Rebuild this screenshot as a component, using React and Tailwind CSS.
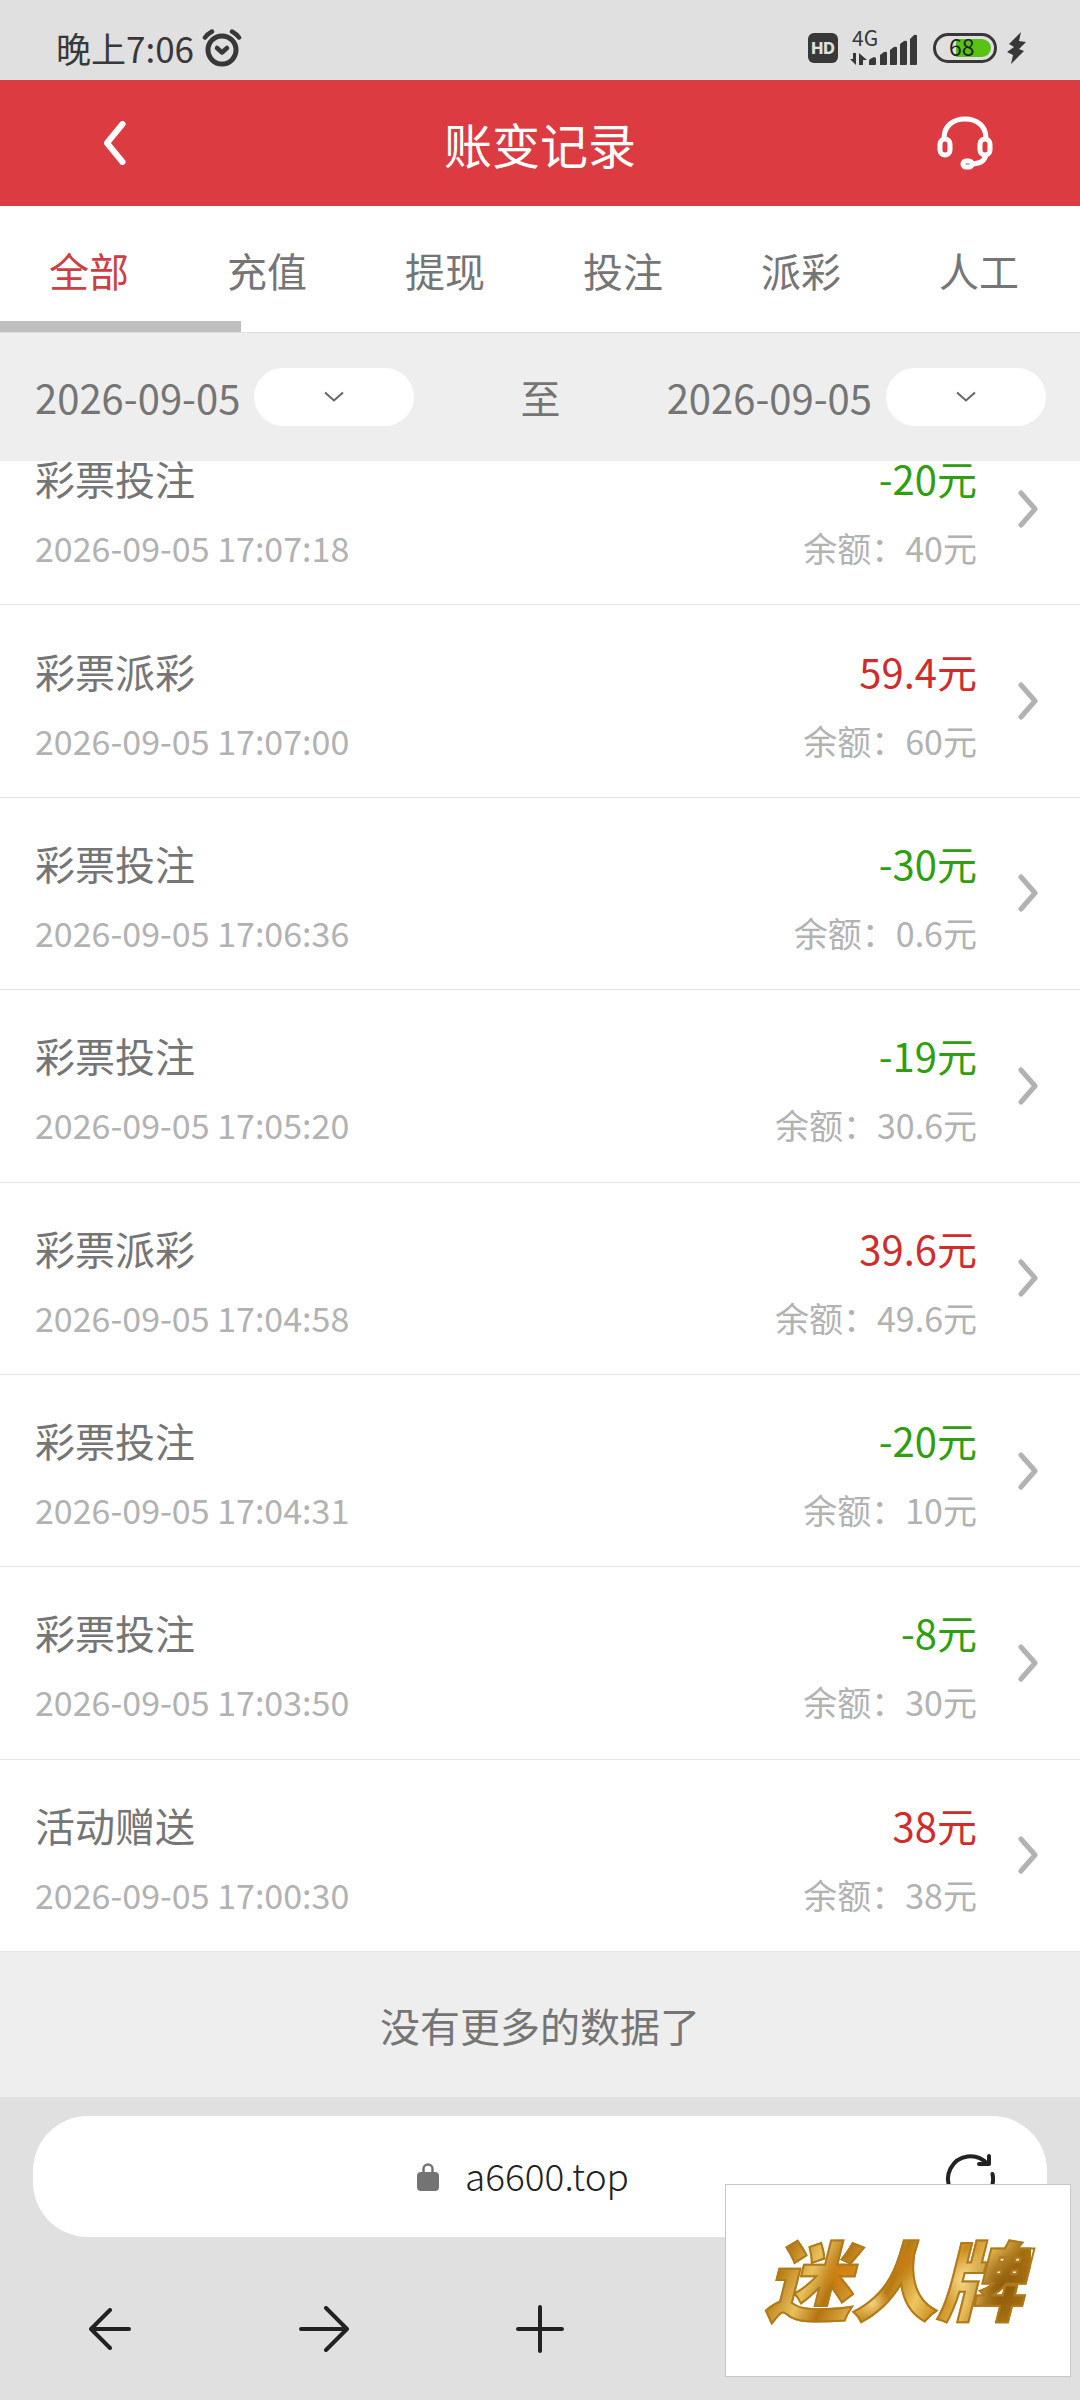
import React, { useState } from 'react';

const tabs = ['全部', '充值', '提现', '投注', '派彩', '人工'];

const records = [
  { type: '彩票投注', time: '2026-09-05 17:07:18', amount: -20, balance: 40 },
  { type: '彩票派彩', time: '2026-09-05 17:07:00', amount: 59.4, balance: 60 },
  { type: '彩票投注', time: '2026-09-05 17:06:36', amount: -30, balance: 0.6 },
  { type: '彩票投注', time: '2026-09-05 17:05:20', amount: -19, balance: 30.6 },
  { type: '彩票派彩', time: '2026-09-05 17:04:58', amount: 39.6, balance: 49.6 },
  { type: '彩票投注', time: '2026-09-05 17:04:31', amount: -20, balance: 10 },
  { type: '彩票投注', time: '2026-09-05 17:03:50', amount: -8, balance: 30 },
  { type: '活动赠送', time: '2026-09-05 17:00:30', amount: 38, balance: 38 },
];

const StatusBar = () => (
  <div className="flex h-20 items-center justify-between bg-[#e0e0e0] pl-14 pr-[54px] pt-4 text-[#383838]">
    <div className="flex items-center gap-2">
      <span className="text-[35px] leading-[50px]">晚上7:06</span>
      <svg width="40" height="38" viewBox="0 0 40 38" fill="none" stroke="currentColor" strokeLinecap="round">
        <circle cx="20" cy="21" r="14" strokeWidth="5" />
        <path d="M3 8.500Q5.500 5 10 2.500M37 8.500Q34.500 5 30 2.500" strokeWidth="4.500" />
        <path d="M15 19l5 4.500 5-4.500" strokeWidth="4.500" strokeLinejoin="round" />
      </svg>
    </div>
    <div className="flex items-center">
      <span className="flex h-[30px] w-[30px] items-center justify-center rounded-md bg-[#383838] font-[Inter] text-base font-extrabold leading-5 text-[#e0e0e0]">
        HD
      </span>
      <svg className="ml-3 overflow-visible" width="68" height="36" viewBox="0 0 68 36" fill="currentColor">
        <text x="2" y="16" fontSize="21">4G</text>
        <path d="M0 29h3v-6h3v12zM9 23l8 7h-4v5H9z" />
        <path d="M19 35v-4q0-1 1-2l4-2q2 0 2 2v5q0 1-1 1zM30 35V25l4-3q3-1 3 1v11q0 1-1 1zM40 35V20l4-3q3-1 3 1v16q0 1-1 1zM50 35V14l4-3q3-1 3 1v22q0 1-1 1zM60 35V9l4-4q3-1 3 1v28q0 1-1 1z" />
      </svg>
      <svg className="ml-[15px] overflow-visible" width="64" height="30" viewBox="0 0 64 30" fill="none">
        <rect x="1.500" y="1.500" width="61" height="27" rx="13.500" stroke="#383838" strokeWidth="3" />
        <path d="M23 6H49a9 9 0 0 1 0 18H23z" fill="#58c314" />
        <text x="16" y="23" fontSize="23" fill="#222">68</text>
      </svg>
      <svg className="ml-[10px]" width="19" height="32" viewBox="0 0 19 32" fill="currentColor">
        <path d="M14 0L2 12l5 3-7 5 6 3-2 9L17 19l-5-2 7-7-7-1z" />
      </svg>
    </div>
  </div>
);

const Header = () => (
  <header className="flex h-[126px] items-center justify-between bg-[#dc3b41] px-[87px] text-white">
    <button type="button" aria-label="返回" className="flex h-14 w-14 items-center justify-center">
      <svg width="24" height="44" viewBox="0 0 24 44" fill="none" stroke="currentColor" strokeWidth="6" strokeLinecap="round" strokeLinejoin="round">
        <path d="M19.500 3L4 22l15.500 19" />
      </svg>
    </button>
    <h1 className="text-5xl leading-[64px]">账变记录</h1>
    <button type="button" aria-label="客服" className="flex h-14 w-14 items-center justify-center">
      <svg width="56" height="56" viewBox="0 0 56 56" fill="none" stroke="currentColor" strokeWidth="5">
        <rect x="3" y="24" width="10" height="16" rx="5" />
        <rect x="43" y="24" width="10" height="16" rx="5" />
        <path d="M7 23C7 11 16 4 28 4s21 7 21 19" />
        <path d="M49 40c-2 7-6 8-13 9" />
        <rect x="26" y="46" width="9" height="6" rx="3" />
      </svg>
    </button>
  </header>
);

const DateField = ({ value, label }) => (
  <div className="flex items-center gap-[14px]">
    <span className="text-[40px] leading-[58px]">{value}</span>
    <button type="button" aria-label={label} className="flex h-[58px] w-40 items-center justify-center rounded-full bg-white">
      <svg width="20" height="12" viewBox="0 0 20 12" fill="none" stroke="#666" strokeWidth="2">
        <path d="M1 1.500l9 8 9-8" />
      </svg>
    </button>
  </div>
);

const RecordRow = ({ record }) => (
  <li className="flex items-center border-b border-[#e6e6e6] bg-white pl-[35px] pr-[42px]">
    <div className="flex flex-1 flex-col gap-[25px] pt-[14px]">
      <span className="text-[40px] leading-10 text-[#757575]">{record.type}</span>
      <time className="text-[34px] leading-[50px] text-[#b2b2b2]">{record.time}</time>
    </div>
    <div className="flex flex-col items-end gap-[25px] pt-[14px]">
      <span className={`text-[40px] leading-10 ${record.amount < 0 ? 'text-[#2f9e10]' : 'text-[#d02c2c]'}`}>
        {record.amount}元
      </span>
      <span className="text-[34px] leading-[50px] text-[#b2b2b2]">余额：{record.balance}元</span>
    </div>
    <svg className="ml-[41px]" width="20" height="40" viewBox="0 0 20 40" fill="none" stroke="#b2b2b2" strokeWidth="5" strokeLinecap="round" strokeLinejoin="round">
      <path d="M3 4l14 16L3 36" />
    </svg>
  </li>
);

const BrowserBar = () => (
  <footer className="relative h-[303px] bg-[#e0e0e0] pt-[19px] text-[#222]">
    <div className="mx-[33px] flex h-[121px] items-center rounded-[55px] bg-white pl-[68px] pr-[52px]">
      <button type="button" className="flex flex-1 items-center justify-center gap-[26px]">
        <svg width="22" height="28" viewBox="0 0 22 28" fill="none">
          <rect y="9" width="22" height="19" rx="4" fill="#737373" />
          <path d="M6.500 10V6a4.500 4.500 0 0 1 9 0v4" stroke="#737373" strokeWidth="2.500" />
        </svg>
        <span className="pb-1 text-[37px] font-light leading-[50px]">a6600.top</span>
      </button>
      <button type="button" aria-label="刷新">
        <svg width="50" height="50" viewBox="0 0 50 50" fill="none" stroke="currentColor" strokeWidth="4" strokeLinecap="round" strokeLinejoin="round">
          <path d="M42 11.500A22.500 22.500 0 1 0 47.500 22" />
          <path d="M44 4v8H34" />
        </svg>
      </button>
    </div>
    <nav className="grid h-[184px] grid-cols-5 items-center justify-items-center">
      <button type="button" aria-label="后退" className="pl-1">
        <svg width="42" height="42" viewBox="0 0 42 42" fill="none" stroke="currentColor" strokeWidth="4" strokeLinecap="round" strokeLinejoin="round">
          <path d="M40 21H2M21 2L2 21l19 19" />
        </svg>
      </button>
      <button type="button" aria-label="前进">
        <svg width="50" height="46" viewBox="0 0 50 46" fill="none" stroke="currentColor" strokeWidth="4" strokeLinecap="round" strokeLinejoin="round">
          <path d="M2 23h46M27 2l21 21-21 21" />
        </svg>
      </button>
      <button type="button" aria-label="新建标签页">
        <svg width="50" height="50" viewBox="0 0 50 50" fill="none" stroke="currentColor" strokeWidth="4" strokeLinecap="round">
          <path d="M3 25h44M25 3v44" />
        </svg>
      </button>
    </nav>
    <div className="absolute bottom-[23px] right-[9px] flex h-[193px] w-[346px] items-center justify-center border border-[#c8c8c8] bg-white pb-2 pr-2">
      <span className="bg-[radial-gradient(circle_at_32%_48%,#d98512_0%,transparent_12%),radial-gradient(circle_at_54%_36%,#c67d12_0%,transparent_12%),radial-gradient(circle_at_90%_60%,#8f5c0c_0%,transparent_16%),radial-gradient(circle_at_76%_52%,#f8dc8a_0%,transparent_14%),radial-gradient(circle_at_42%_74%,#f3d27a_0%,transparent_10%),linear-gradient(115deg,#a8710f_0%,#b67a12_14%,#e9c15c_24%,#b57410_32%,#dfae48_42%,#b8780f_50%,#eec65f_60%,#c98a1c_68%,#e8bd58_76%,#a46c10_86%,#c98d22_100%)] bg-clip-text px-2 text-[86px] font-black italic leading-[110px] text-transparent [-webkit-text-stroke:2px_#b07a1c]">
        迷人牌
      </span>
    </div>
  </footer>
);

const App = () => {
  const [activeTab, setActiveTab] = useState('全部');

  return (
    <div className="flex min-h-screen flex-col bg-[#eeeeee] font-['Noto_Sans_CJK_SC',sans-serif] text-[#757575]">
      <StatusBar />
      <Header />
      <div className="relative flex h-[127px] overflow-hidden border-b border-[#e0e0e0] bg-white">
        {tabs.map((tab) => (
          <button
            key={tab}
            type="button"
            onClick={() => setActiveTab(tab)}
            className={`shrink-0 px-[49px] pt-[2px] text-[40px] leading-[60px] ${activeTab === tab ? 'text-[#cc3f42]' : ''}`}
          >
            {tab}
          </button>
        ))}
        {/* scroll indicator */}
        <div className="absolute bottom-0 left-0 h-[11px] w-[241px] bg-[#bfbfbf]" />
      </div>
      <div className="flex h-32 items-center justify-between pl-[35px] pr-[34px]">
        <DateField value="2026-09-05" label="开始日期" />
        <span className="text-[40px] leading-[58px]">至</span>
        <DateField value="2026-09-05" label="结束日期" />
      </div>
      <main className="flex flex-1 flex-col overflow-hidden">
        {/* the list is scrolled slightly under the date bar */}
        <ul className="-mt-12 grid flex-1 auto-rows-fr">
          {records.map((record) => (
            <RecordRow key={record.time} record={record} />
          ))}
        </ul>
      </main>
      <p className="flex h-[145px] items-center justify-center text-[40px] leading-[60px]">没有更多的数据了</p>
      <BrowserBar />
    </div>
  );
};

export default App;
